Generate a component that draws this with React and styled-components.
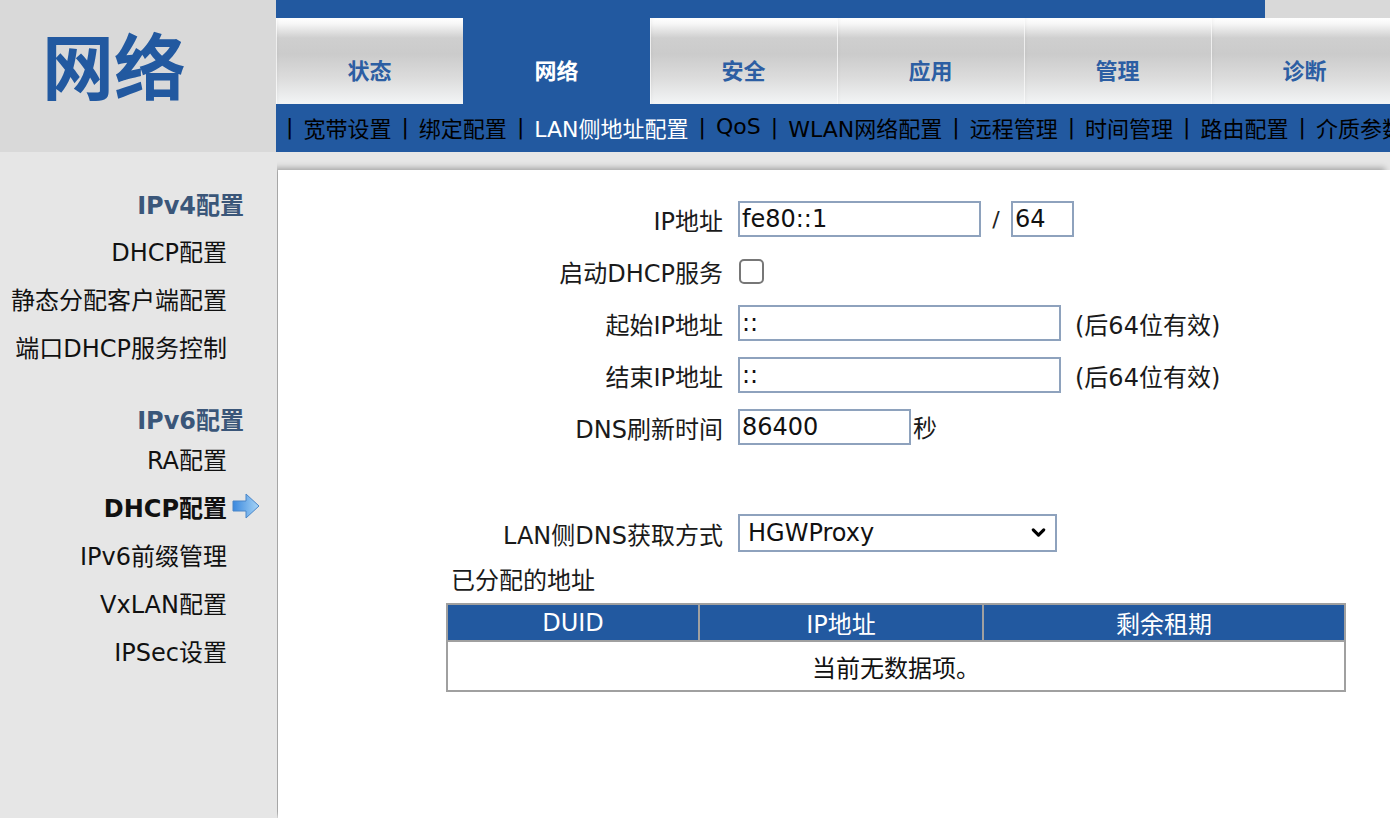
import React from "react";
import styled, { createGlobalStyle } from "styled-components";
import { ChevronDown } from "lucide-react";

const BLUE = "#2259a0";

const Global = createGlobalStyle`
  body {
    margin: 0;
    background: #e6e6e6;
    font-family: "DejaVu Sans", "Noto Sans CJK SC", sans-serif;
    overflow: hidden;
  }
`;

const tabs = ["状态", "网络", "安全", "应用", "管理", "诊断"];
const subs = ["宽带设置", "绑定配置", "LAN侧地址配置", "QoS", "WLAN网络配置", "远程管理", "时间管理", "路由配置", "介质参数配置"];

const Arrow = () => (
  <svg width="28" height="26" viewBox="0 0 28 26">
    <defs>
      <linearGradient id="ag" x1="0" y1="0" x2="1" y2="0">
        <stop offset="0" stopColor="#3a88de" />
        <stop offset="1" stopColor="#a8d5f6" />
      </linearGradient>
    </defs>
    <path d="M1 8 H14 V1 L27 13 L14 25 V18 H1 Z" fill="url(#ag)" stroke="#4a86c8" strokeWidth="1" />
  </svg>
);

const App = () => {
  return (
    <>
      <Global />
      <Header>
        <Logo>网络</Logo>
        <Nav>
          <TopStrip>
            <TopBlue />
          </TopStrip>
          <Tabs>
            {tabs.map((t) => (
              <Tab key={t} $active={t === "网络"}>
                {t}
              </Tab>
            ))}
          </Tabs>
          <SubNav>
            {subs.map((s) => (
              <React.Fragment key={s}>
                <Sep>|</Sep>
                <SubItem $active={s === "LAN侧地址配置"}>{s}</SubItem>
              </React.Fragment>
            ))}
          </SubNav>
        </Nav>
      </Header>
      <Body>
        <Sidebar>
          <Group>
            <Heading $h={45}>IPv4配置</Heading>
            <Item>DHCP配置<Slot /></Item>
            <Item>静态分配客户端配置<Slot /></Item>
            <Item>端口DHCP服务控制<Slot /></Item>
          </Group>
          <Group $gap={33}>
            <Heading $h={31}>IPv6配置</Heading>
            <Item>RA配置<Slot /></Item>
            <Item $active>
              DHCP配置
              <Slot>
                <Arrow />
              </Slot>
            </Item>
            <Item>IPv6前缀管理<Slot /></Item>
            <Item>VxLAN配置<Slot /></Item>
            <Item>IPSec设置<Slot /></Item>
          </Group>
        </Sidebar>
        <Main>
          <Panel>
            <Row>
              <Label>IP地址</Label>
              <Field>
                <Input $w={243} defaultValue="fe80::1" />
                <Slash>/</Slash>
                <Input $w={63} defaultValue="64" />
              </Field>
            </Row>
            <Row>
              <Label>启动DHCP服务</Label>
              <Field>
                <Check type="checkbox" />
              </Field>
            </Row>
            <Row>
              <Label>起始IP地址</Label>
              <Field>
                <Input $w={323} defaultValue="::" />
                <Hint>(后64位有效)</Hint>
              </Field>
            </Row>
            <Row>
              <Label>结束IP地址</Label>
              <Field>
                <Input $w={323} defaultValue="::" />
                <Hint>(后64位有效)</Hint>
              </Field>
            </Row>
            <Row>
              <Label>DNS刷新时间</Label>
              <Field>
                <Input $w={173} defaultValue="86400" />
                <Unit>秒</Unit>
              </Field>
            </Row>
            <Row $mt={69} $h={38}>
              <Label>LAN侧DNS获取方式</Label>
              <Field>
                <SelectWrap>
                  <Select defaultValue="HGWProxy">
                    <option>HGWProxy</option>
                    <option>DNS Server</option>
                  </Select>
                  <Chevron>
                    <ChevronDown size={21} strokeWidth={3.6} />
                  </Chevron>
                </SelectWrap>
              </Field>
            </Row>
            <Caption>已分配的地址</Caption>
            <Table>
              <thead>
                <tr>
                  <Th style={{ width: 250 }}>DUID</Th>
                  <Th style={{ width: 282 }}>IP地址</Th>
                  <Th>剩余租期</Th>
                </tr>
              </thead>
              <tbody>
                <tr>
                  <Td colSpan={3}>当前无数据项。</Td>
                </tr>
              </tbody>
            </Table>
          </Panel>
        </Main>
      </Body>
    </>
  );
};

const Header = styled.header`
  display: flex;
  height: 152px;
`;

const Logo = styled.div`
  width: 276px;
  flex-shrink: 0;
  box-sizing: border-box;
  background: #d9d9d9;
  display: flex;
  align-items: center;
  padding: 0 0 26px 42px;
  font-family: "Noto Sans CJK SC", sans-serif;
  font-weight: 700;
  font-size: 72px;
  line-height: 1;
  color: ${BLUE};
`;

const Nav = styled.div`
  flex: 1;
  min-width: 0;
  display: flex;
  flex-direction: column;
`;

const TopStrip = styled.div`
  height: 18px;
  display: flex;
  background: #d9d9d9;
`;

const TopBlue = styled.div`
  width: 989px;
  background: ${BLUE};
`;

const Tabs = styled.div`
  height: 86px;
  display: flex;
  overflow: hidden;
`;

const Tab = styled.div`
  width: 187px;
  flex-shrink: 0;
  box-sizing: border-box;
  display: flex;
  justify-content: center;
  align-items: center;
  padding-top: 16px;
  font-family: "Noto Sans CJK SC", sans-serif;
  font-weight: 700;
  font-size: 22px;
  color: ${(p) => (p.$active ? "#fff" : "#2c5ea3")};
  background: ${(p) =>
    p.$active
      ? BLUE
      : "linear-gradient(#ffffff 0px, #f6f6f6 6px, #cfcfcf 20px, #cbcbcb 36px, #dcdcdc 60px, #f3f5f6 86px)"};
  box-shadow: ${(p) =>
    p.$active ? "none" : "inset 1px 0 0 rgba(255,255,255,0.7), inset 3px 0 4px -2px rgba(0,0,0,0.06)"};
`;

const SubNav = styled.div`
  height: 48px;
  box-sizing: border-box;
  padding-bottom: 3px;
  background: ${BLUE};
  display: flex;
  align-items: center;
  white-space: nowrap;
  overflow: hidden;
  font-size: 22px;
  color: #000;
`;

const Sep = styled.span`
  padding: 0 10px;
`;

const SubItem = styled.span`
  color: ${(p) => (p.$active ? "#fff" : "#000")};
`;

const Body = styled.div`
  display: flex;
  height: calc(100vh - 152px);
`;

const Sidebar = styled.nav`
  width: 277px;
  flex-shrink: 0;
  padding-top: 29px;
  box-sizing: border-box;
`;

const Group = styled.div`
  margin-top: ${(p) => p.$gap || 0}px;
`;

const Heading = styled.div`
  display: flex;
  align-items: center;
  justify-content: flex-end;
  height: ${(p) => p.$h}px;
  padding-right: 33px;
  font-size: 24px;
  font-weight: 700;
  color: #3a5679;
`;

const Item = styled.div`
  display: flex;
  justify-content: flex-end;
  align-items: center;
  height: 48px;
  font-size: 24px;
  font-weight: ${(p) => (p.$active ? 700 : 400)};
  color: #111;
`;

const Slot = styled.span`
  width: 50px;
  flex-shrink: 0;
  display: flex;
  align-items: center;
  padding-left: 5px;
  box-sizing: border-box;
`;

const Main = styled.main`
  flex: 1;
  padding: 18px 0 0 1px;
  overflow: hidden;
`;

const Panel = styled.section`
  height: 100%;
  box-sizing: border-box;
  background: #fff;
  box-shadow: -5px -2px 6px rgba(0, 0, 0, 0.3);
  padding: 31px 0 0 168px;
`;

const Row = styled.div`
  display: grid;
  grid-template-columns: 277px auto;
  column-gap: 15px;
  align-items: center;
  height: ${(p) => p.$h || 36}px;
  margin-top: ${(p) => p.$mt || 0}px;
  margin-bottom: 16px;
`;

const Label = styled.label`
  text-align: right;
  font-size: 24px;
  color: #1a1a1a;
  white-space: nowrap;
`;

const Field = styled.div`
  display: flex;
  align-items: center;
`;

const Input = styled.input`
  width: ${(p) => p.$w}px;
  height: 36px;
  box-sizing: border-box;
  border: 2px solid #8ea2bd;
  padding: 0 2px;
  font-family: "DejaVu Sans", sans-serif;
  font-size: 24px;
  color: #111;
  outline: none;
`;

const Slash = styled.span`
  width: 30px;
  text-align: center;
  font-size: 22px;
  color: #222;
`;

const Hint = styled.span`
  margin-left: 14px;
  font-size: 24px;
  color: #1a1a1a;
`;

const Unit = styled.span`
  margin-left: 2px;
  align-self: flex-start;
  font-size: 24px;
  color: #1a1a1a;
`;

const Check = styled.input`
  appearance: none;
  width: 25px;
  height: 25px;
  margin: 0 0 0 1px;
  border: 2px solid #777;
  border-radius: 5px;
  background: #fff;
`;

const SelectWrap = styled.div`
  position: relative;
  width: 319px;
  height: 38px;
`;

const Select = styled.select`
  appearance: none;
  width: 100%;
  height: 100%;
  box-sizing: border-box;
  border: 2px solid #8ea2bd;
  border-radius: 0;
  background: #fff;
  padding: 0 0 0 8px;
  font-family: "DejaVu Sans", sans-serif;
  font-size: 24px;
  color: #111;
`;

const Chevron = styled.span`
  position: absolute;
  right: 8px;
  top: 8px;
  color: #000;
  display: flex;
  pointer-events: none;
`;

const Caption = styled.div`
  margin: -5px 0 4px 5px;
  line-height: 36px;
  font-size: 24px;
  color: #1a1a1a;
`;

const Table = styled.table`
  width: 900px;
  border-collapse: collapse;
  border: 2px solid #a0a0a0;
  font-size: 24px;
`;

const Th = styled.th`
  height: 34px;
  padding: 0;
  background: ${BLUE};
  color: #fff;
  font-weight: 400;
  border: 2px solid #a0a0a0;
`;

const Td = styled.td`
  height: 48px;
  padding: 0;
  text-align: center;
  color: #111;
`;

export default App;
